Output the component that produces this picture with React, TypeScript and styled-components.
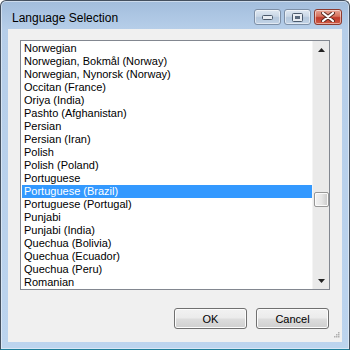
import styled, { createGlobalStyle } from 'styled-components';

const GlobalStyle = createGlobalStyle`
  html, body {
    margin: 0;
    padding: 0;
    background: #ffffff;
  }
`;

const languages = [
  'Norwegian',
  'Norwegian, Bokmål (Norway)',
  'Norwegian, Nynorsk (Norway)',
  'Occitan (France)',
  'Oriya (India)',
  'Pashto (Afghanistan)',
  'Persian',
  'Persian (Iran)',
  'Polish',
  'Polish (Poland)',
  'Portuguese',
  'Portuguese (Brazil)',
  'Portuguese (Portugal)',
  'Punjabi',
  'Punjabi (India)',
  'Quechua (Bolivia)',
  'Quechua (Ecuador)',
  'Quechua (Peru)',
  'Romanian',
];

function App() {
  return (
    <>
      <GlobalStyle />
      <Window>
        <TitleBar>
          <Title>Language Selection</Title>
          <CaptionButtons />
        </TitleBar>
        <Client>
          <ListBox>
            <Items>
              {languages.map((name) => (
                <Row key={name} selected={name === 'Portuguese (Brazil)'}>
                  {name}
                </Row>
              ))}
            </Items>
            <ScrollBar thumbTop={134} />
          </ListBox>
          <ButtonRow>
            <PushButton>OK</PushButton>
            <PushButton>Cancel</PushButton>
          </ButtonRow>
          <Grip>
            <svg width="7" height="7" viewBox="0 0 7 7">
              {[[5, 0], [3, 2], [5, 2], [1, 4], [3, 4], [5, 4]].map(([x, y]) => (
                <rect key={`${x}-${y}`} x={x} y={y} width="1.5" height="1.5" fill="#b0b0b0" />
              ))}
            </svg>
          </Grip>
        </Client>
      </Window>
    </>
  );
}

function CaptionButtons() {
  return (
    <Captions>
      <CaptionButton>
        <svg width="11" height="5" viewBox="0 0 11 5">
          <rect x="0.5" y="0.5" width="10" height="4" rx="1" fill="#e8edf3" stroke="#4b5a6c" />
        </svg>
      </CaptionButton>
      <CaptionButton>
        <svg width="11" height="9" viewBox="0 0 11 9">
          <rect x="0.5" y="0.5" width="10" height="8" rx="1" fill="#e8edf3" stroke="#4b5a6c" />
          <rect x="3" y="3" width="5" height="3" fill="#5a6a7e" />
        </svg>
      </CaptionButton>
      <CaptionButton close>
        <svg width="14" height="10" viewBox="0 0 14 10">
          <path d="M2 1 L12 9 M12 1 L2 9" stroke="#5a2a22" strokeWidth="4" strokeLinecap="round" />
          <path d="M2 1 L12 9 M12 1 L2 9" stroke="#ffffff" strokeWidth="2.2" strokeLinecap="round" />
        </svg>
      </CaptionButton>
    </Captions>
  );
}

function ScrollBar({ thumbTop }: { thumbTop: number }) {
  return (
    <Scroll>
      <ArrowButton>
        <svg width="7" height="4" viewBox="0 0 7 4">
          <path d="M3.5 0 L7 4 L0 4 Z" fill="#222" />
        </svg>
      </ArrowButton>
      <Track>
        <Thumb style={{ marginTop: thumbTop }} />
      </Track>
      <ArrowButton>
        <svg width="7" height="4" viewBox="0 0 7 4">
          <path d="M0 0 L7 0 L3.5 4 Z" fill="#222" />
        </svg>
      </ArrowButton>
    </Scroll>
  );
}

const Window = styled.div`
  width: 350px;
  height: 350px;
  box-sizing: border-box;
  display: flex;
  flex-direction: column;
  border: 1px solid #44505f;
  border-bottom-color: #1f7f9a;
  border-radius: 6px 6px 0 0;
  background: linear-gradient(#a2bddc 0px, #b6cee9 28px, #bcd4ee 100%);
  box-shadow: inset 0 0 0 1px rgba(255, 255, 255, 0.45);
  padding: 0 7px 7px 7px;
`;

const TitleBar = styled.div`
  height: 28px;
  display: flex;
  justify-content: space-between;
  align-items: flex-start;
`;

const Title = styled.div`
  font-family: 'Liberation Sans', Arial, sans-serif;
  font-size: 12px;
  line-height: 16px;
  color: #000;
  padding: 9px 0 0 4px;
`;

const Captions = styled.div`
  display: flex;
  gap: 3px;
  padding-top: 8px;
`;

const CaptionButton = styled.div<{ close?: boolean }>`
  width: ${(p) => (p.close ? 28 : 27)}px;
  height: 16px;
  box-sizing: border-box;
  display: flex;
  align-items: center;
  justify-content: center;
  border: 1px solid ${(p) => (p.close ? '#8d3a2e' : '#7d8fa6')};
  border-radius: 3px;
  background: ${(p) =>
    p.close
      ? 'linear-gradient(#e8a596 0%, #d6725d 45%, #c0392a 55%, #cf5a44 100%)'
      : 'linear-gradient(#dfe8f2 0%, #c9d7e6 45%, #b4c7dc 55%, #c3d4e7 100%)'};
  box-shadow: inset 0 0 0 1px rgba(255, 255, 255, 0.5);
`;

const Client = styled.div`
  flex: 1;
  position: relative;
  background: #f0f0f0;
  padding: 11px 12px 0 12px;
  display: flex;
  flex-direction: column;
`;

const ListBox = styled.div`
  height: 250px;
  box-sizing: border-box;
  border: 1px solid #828790;
  background: #ffffff;
  display: flex;
`;

const Items = styled.div`
  flex: 1;
  padding: 1px 0 0 1px;
  overflow: hidden;
`;

const Row = styled.div<{ selected?: boolean }>`
  height: 13px;
  line-height: 13px;
  padding-left: 2px;
  font-family: 'Liberation Sans', Arial, sans-serif;
  font-size: 11px;
  white-space: nowrap;
  color: ${(p) => (p.selected ? '#ffffff' : '#000000')};
  background: ${(p) => (p.selected ? '#3399ff' : 'transparent')};
`;

const Scroll = styled.div`
  width: 17px;
  display: flex;
  flex-direction: column;
  background: #eaeaea;
  border-left: 1px solid #f4f4f4;
  box-sizing: border-box;
`;

const ArrowButton = styled.div`
  height: 17px;
  display: flex;
  align-items: center;
  justify-content: center;
`;

const Track = styled.div`
  flex: 1;
  display: flex;
  justify-content: center;
`;

const Thumb = styled.div`
  width: 15px;
  height: 15px;
  box-sizing: border-box;
  border: 1px solid #979797;
  border-radius: 2px;
  background: linear-gradient(90deg, #f2f2f2 0%, #e6e6e6 50%, #c9c9c9 100%);
  box-shadow: inset 0 0 0 1px #fbfbfb;
`;

const ButtonRow = styled.div`
  display: flex;
  justify-content: flex-end;
  gap: 9px;
  margin-top: 18px;
  padding-right: 1px;
`;

const PushButton = styled.button`
  width: 73px;
  height: 21px;
  box-sizing: border-box;
  border: 1px solid #707070;
  border-radius: 3px;
  padding: 0;
  font-family: 'Liberation Sans', Arial, sans-serif;
  font-size: 11px;
  color: #000;
  background: linear-gradient(#f2f2f2 0%, #ebebeb 48%, #dddddd 52%, #cfcfcf 100%);
  box-shadow: inset 0 0 0 1px #fcfcfc;
`;

const Grip = styled.div`
  position: absolute;
  right: 2px;
  bottom: 3px;
  display: flex;
`;

export default App;
